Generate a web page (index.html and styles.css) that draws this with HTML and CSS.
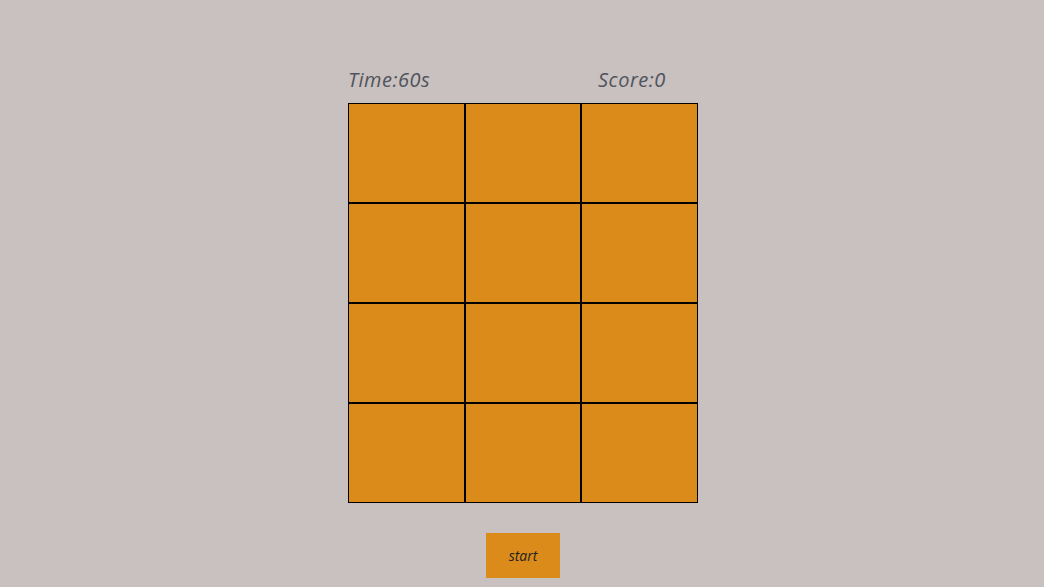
FILE: index.html
```html
<!DOCTYPE html>
<html>
<head>
<meta charset="utf-8">
<link rel="stylesheet" href="styles.css">
<title>Game</title>
</head>
<body>
<main class="game">
  <div class="stats">
    <span class="stat">Time:60s</span>
    <span class="stat">Score:0</span>
  </div>
  <div class="board">
    <div class="cell"></div><div class="cell"></div><div class="cell"></div>
    <div class="cell"></div><div class="cell"></div><div class="cell"></div>
    <div class="cell"></div><div class="cell"></div><div class="cell"></div>
    <div class="cell"></div><div class="cell"></div><div class="cell"></div>
  </div>
  <button class="start">start</button>
</main>
</body>
</html>
```

FILE: styles.css
```css
html, body {
  margin: 0;
  padding: 0;
  background: #c9c0c0;
  height: 100%;
}
body {
  font-family: "Open Sans", "DejaVu Sans", sans-serif;
}
.game {
  display: flex;
  flex-direction: column;
  align-items: center;
  padding-top: 65px;
  padding-left: 2px;
}
.stats {
  width: 350px;
  display: grid;
  grid-template-columns: 250px 1fr;
  height: 38px;
  align-items: start;
}
.stat {
  font-style: italic;
  font-size: 20px;
  line-height: 30px;
  color: #4f545c;
  letter-spacing: 0.5px;
}
.board {
  width: 350px;
  display: grid;
  grid-template-columns: repeat(3, 1fr);
  grid-auto-rows: 100px;
}
.cell {
  background: #db8b19;
  border: 1px solid #000;
}
.start {
  margin-top: 30px;
  width: 74px;
  height: 45px;
  border: none;
  background: #db8b19;
  font-family: "Open Sans", "DejaVu Sans", sans-serif;
  font-style: italic;
  font-size: 14px;
  color: #222;
  padding: 0;
}
```
